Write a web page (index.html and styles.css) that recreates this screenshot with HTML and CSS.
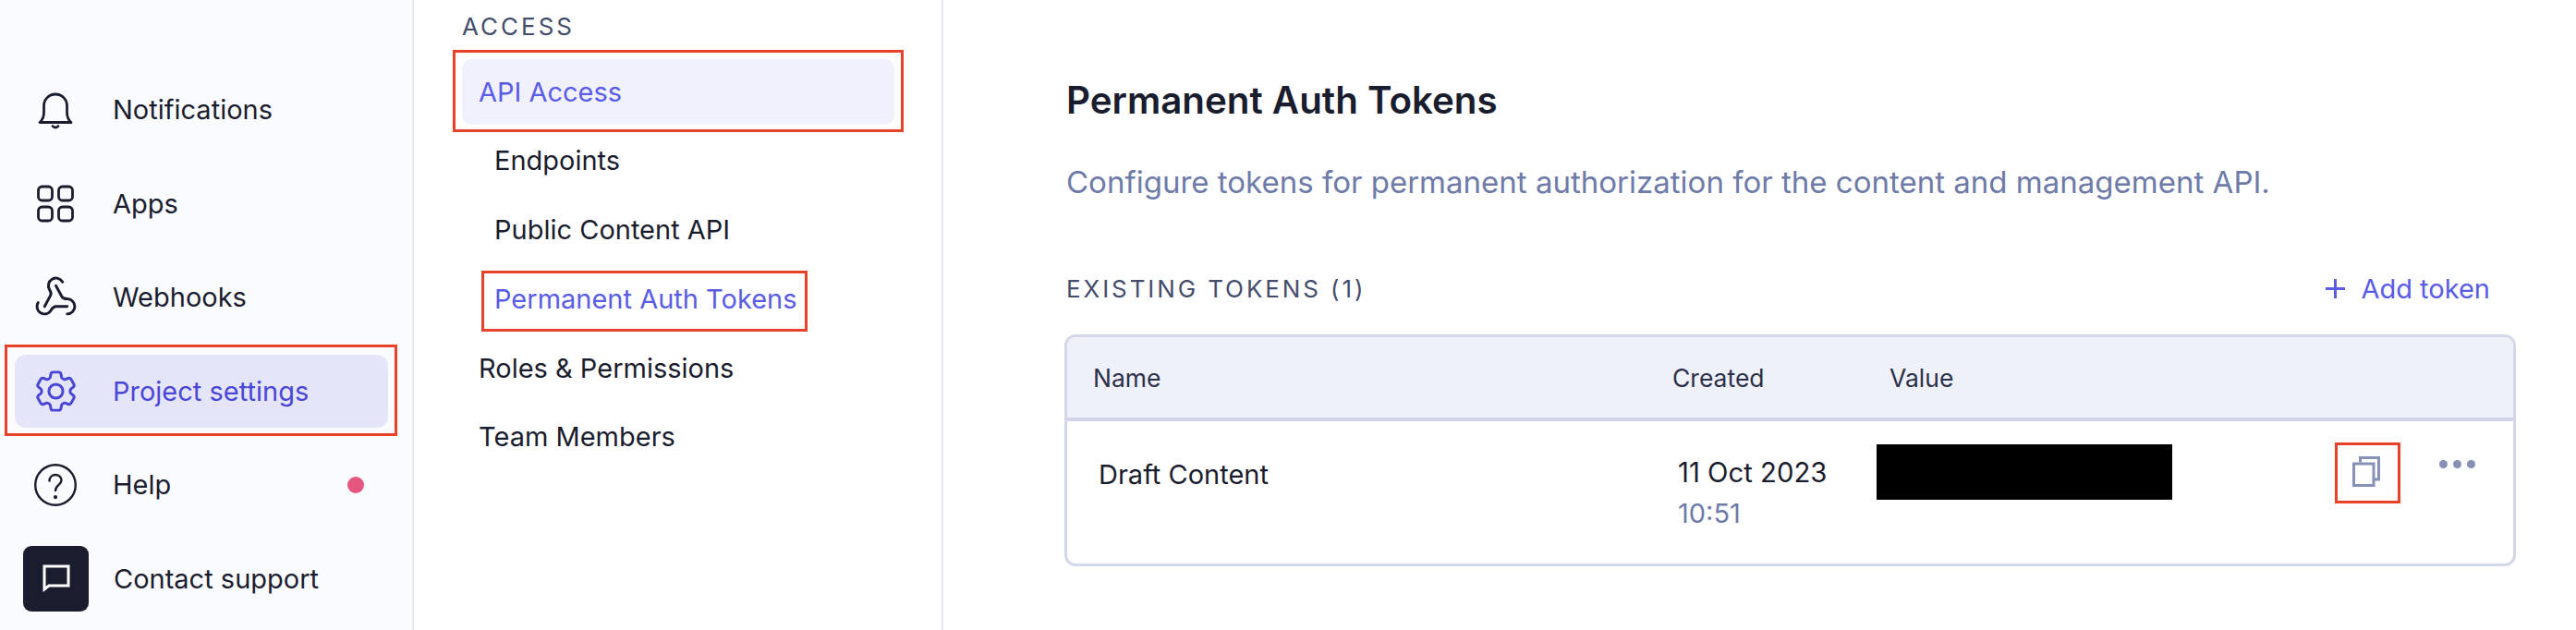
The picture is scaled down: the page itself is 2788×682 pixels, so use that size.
FILE: index.html
```html
<!DOCTYPE html>
<html lang="en">
<head>
<meta charset="utf-8">
<title>Permanent Auth Tokens</title>
<link rel="stylesheet" href="styles.css">
</head>
<body>
<div class="app">
  <aside class="sidebar">
    <a class="nav-item">
      <svg class="nav-icon" viewBox="0 0 44 44"><path d="M5 35.500c3-2.500 4.500-6 4.500-11V17.500C9.500 10.500 15 5 22 5s12.500 5.500 12.500 12.500V24.500c0 5 1.500 8.500 4.500 11zM19 39.500c1.500 2 4.500 2 6 0"/></svg>
      <span>Notifications</span>
    </a>
    <a class="nav-item">
      <svg class="nav-icon" viewBox="0 0 44 44"><rect x="3.500" y="4" width="15" height="15" rx="4"/><rect x="25.500" y="4" width="15" height="15" rx="4"/><rect x="3.500" y="26" width="15" height="15" rx="4"/><rect x="25.500" y="26" width="15" height="15" rx="4"/></svg>
      <span>Apps</span>
    </a>
    <a class="nav-item">
      <svg class="nav-icon webhook" viewBox="0 0 24 24"><path d="M18 16.980h-5.990c-1.100 0-1.950.940-2.480 1.900A4 4 0 0 1 2 17c.010-.700.200-1.400.570-2"/><path d="m6 17 3.130-5.780c.530-.970.100-2.180-.500-3.100a4 4 0 1 1 6.890-4.060"/><path d="m12 6 3.130 5.730C15.660 12.700 16.900 13 18 13a4 4 0 0 1 0 8"/></svg>
      <span>Webhooks</span>
    </a>
    <a class="nav-item active marked">
      <svg class="nav-icon gear" viewBox="0 0 24 24"><path d="M9.594 3.940c.090-.542.560-.940 1.110-.940h2.593c.550 0 1.020.398 1.110.940l.213 1.281c.063.374.313.686.645.870.074.040.147.083.220.127.325.196.720.257 1.075.124l1.217-.456a1.125 1.125 0 0 1 1.370.490l1.296 2.247a1.125 1.125 0 0 1-.260 1.431l-1.003.827c-.293.241-.438.613-.430.992a7.723 7.723 0 0 1 0 .255c-.008.378.137.750.430.991l1.004.827c.424.350.534.955.260 1.430l-1.298 2.247a1.125 1.125 0 0 1-1.369.491l-1.217-.456c-.355-.133-.750-.072-1.076.124a6.470 6.470 0 0 1-.220.128c-.331.183-.581.495-.644.869l-.213 1.281c-.090.543-.560.940-1.110.940h-2.594c-.550 0-1.019-.398-1.110-.940l-.213-1.281c-.062-.374-.312-.686-.644-.870a6.520 6.520 0 0 1-.220-.127c-.325-.196-.720-.257-1.076-.124l-1.217.456a1.125 1.125 0 0 1-1.369-.490l-1.297-2.247a1.125 1.125 0 0 1 .260-1.431l1.004-.827c.292-.240.437-.613.430-.991a6.932 6.932 0 0 1 0-.255c.007-.380-.138-.751-.430-.992l-1.004-.827a1.125 1.125 0 0 1-.260-1.430l1.297-2.247a1.125 1.125 0 0 1 1.370-.491l1.216.456c.356.133.751.072 1.076-.124.072-.044.146-.086.220-.128.332-.183.582-.495.644-.869l.214-1.280Z"/><circle cx="12" cy="12" r="3.300"/></svg>
      <span>Project settings</span>
    </a>
    <a class="nav-item">
      <svg class="nav-icon help" viewBox="0 0 46 46"><circle cx="23" cy="23" r="21.800"/><path d="M16.500 18.500c0-4 3-6.500 6.500-6.500s6.500 2.500 6.500 6c0 4.800-6.500 5.200-6.500 11"/><path class="dot" d="M23 36v.3"/></svg>
      <span>Help</span>
      <i class="badge"></i>
    </a>
    <a class="nav-item">
      <span class="support-box">
        <svg class="support-icon" viewBox="0 0 32 32"><path d="M3 3h26v21H8l-5 4z"/></svg>
      </span>
      <span>Contact support</span>
    </a>
  </aside>

  <nav class="subnav">
    <div class="subnav-title">ACCESS</div>
    <a class="sub-item current marked">API Access</a>
    <a class="sub-item nested">Endpoints</a>
    <a class="sub-item nested">Public Content API</a>
    <a class="sub-item nested selected"><span class="selected-label marked">Permanent Auth Tokens</span></a>
    <a class="sub-item">Roles &amp; Permissions</a>
    <a class="sub-item">Team Members</a>
  </nav>

  <main class="content">
    <h1 class="title">Permanent Auth Tokens</h1>
    <p class="subtitle">Configure tokens for permanent authorization for the content and management API.</p>
    <div class="section-head">
      <h2 class="section-title">EXISTING TOKENS (1)</h2>
      <a class="add-token">
        <svg class="plus" viewBox="0 0 21 21"><path d="M10.500 0v21M0 10.500h21"/></svg>
        Add token
      </a>
    </div>
    <div class="table">
      <div class="row head">
        <div class="cell-name">Name</div>
        <div class="cell-created">Created</div>
        <div class="cell-value">Value</div>
      </div>
      <div class="row body">
        <div class="cell-name draft">Draft Content</div>
        <div class="cell-created">
          <div class="date">11 Oct 2023</div>
          <div class="time">10:51</div>
        </div>
        <div class="redacted"></div>
        <div class="copy-box">
          <svg class="copy" viewBox="0 0 30 33"><path d="M8.500 6.500V1.500h20V25H23"/><rect x="1.500" y="8" width="21.500" height="23.500"/></svg>
        </div>
        <div class="dots"><i></i><i></i><i></i></div>
      </div>
    </div>
  </main>
</div>
</body>
</html>
```

FILE: styles.css
```css
* { box-sizing: border-box; }
html, body { margin: 0; height: 100%; background: #fff; }
body { font-family: Inter, "Noto Sans", sans-serif; color: #1a1d2e; overflow: hidden; }
h1, h2, p { margin: 0; font-weight: normal; }

.app { display: flex; height: 682px; }

.marked { position: relative; }
.marked::after {
  content: "";
  position: absolute;
  inset: -11px -10px -9px -11px;
  border: 3px solid #e8432a;
  pointer-events: none;
}

.sidebar {
  width: 448px;
  flex: none;
  background: #fafbff;
  border-right: 2px solid #e6e8f5;
  padding: 79px 26px 0 16px;
  display: flex;
  flex-direction: column;
  gap: 22.500px;
}
.nav-item {
  height: 79px;
  display: flex;
  align-items: center;
  gap: 17px;
  padding-left: 9px;
  font-size: 29px;
  border-radius: 12px;
}
.nav-icon {
  width: 44px;
  height: 44px;
  margin: 0 23px 0 13px;
  flex: none;
  fill: none;
  stroke: #1a1d2e;
  stroke-width: 2.800;
  stroke-linejoin: round;
  stroke-linecap: round;
}
.nav-icon.webhook { width: 49px; height: 49px; margin: 0 20.500px 0 10.500px; stroke-width: 1.450; }
.nav-icon.gear { width: 55px; height: 55px; margin: 0 17.500px 0 7.500px; stroke-width: 1.300; }
.nav-icon.help { width: 46px; height: 46px; margin: 0 22px 0 12px; stroke-width: 2.400; }
.nav-item.active { background: #e5e5fa; color: #4a46d6; }
.nav-item.active .nav-icon { stroke: #4a46d6; }
.dot { stroke-width: 4; }
.badge {
  margin-left: auto;
  margin-right: 26px;
  width: 18px;
  height: 18px;
  border-radius: 50%;
  background: #e5577f;
}
.support-box {
  width: 71px;
  height: 71px;
  flex: none;
  border-radius: 9px;
  background: #1a1d2e;
  display: flex;
  align-items: center;
  justify-content: center;
  margin-right: 10px;
}
.support-icon { width: 32px; height: 32px; fill: none; stroke: #fff; stroke-width: 3; }

.subnav {
  width: 573px;
  flex: none;
  border-right: 2px solid #e6e8f5;
  padding: 0 51px 0 52px;
  background: #fff;
}
.subnav-title {
  font-size: 26px;
  letter-spacing: 3px;
  color: #454d6d;
  line-height: 30px;
  padding-top: 14px;
  height: 63.500px;
}
.sub-item {
  display: flex;
  align-items: center;
  height: 71px;
  margin-bottom: 3.800px;
  padding-left: 18px;
  font-size: 29px;
  border-radius: 10px;
}
.sub-item.nested { padding-left: 35px; }
.sub-item.current { background: #f1f1fd; color: #5a5ce6; }
.sub-item.current::after { inset: -10px -10px -8px -10px; }
.sub-item.selected { color: #5a5ce6; }
.selected-label::after { inset: -13px -11px -18px -14px; }

.content { flex: 1; padding: 85px 65px 0 133px; }
.title { font-size: 40.300px; font-weight: 600; line-height: 48px; color: #1a1d2e; }
.subtitle { font-size: 33.030px; line-height: 40px; margin-top: 44px; color: #6e7aa8; }
.section-head {
  display: flex;
  align-items: center;
  justify-content: space-between;
  margin-top: 75px;
  height: 40px;
  padding-right: 28px;
}
.section-title { font-size: 26px; letter-spacing: 2.900px; color: #454d6d; }
.add-token { display: flex; align-items: center; gap: 17px; font-size: 29px; color: #5a5ce6; }
.plus { width: 21px; height: 21px; fill: none; stroke: #5a5ce6; stroke-width: 3; }

.table {
  margin: 30px 0 0 -2px;
  height: 251px;
  border: 3px solid #d3d7e8;
  border-radius: 12px;
  overflow: hidden;
}
.row { display: flex; position: relative; }
.head {
  height: 91px;
  align-items: center;
  background: #eef1fa;
  border-bottom: 4px solid #d1d4e6;
  font-size: 26.500px;
  color: #2c3049;
}
.head .cell-name { width: 655px; padding-left: 28px; }
.head .cell-created { width: 235px; }
.body { height: 155px; padding-top: 24px; }
.body .cell-name { width: 661px; padding-left: 34px; }
.draft { font-size: 29px; line-height: 68px; height: 68px; }
.body .cell-created { width: 215px; padding-top: 14px; }
.date { font-size: 29.300px; line-height: 36px; }
.time { font-size: 29px; line-height: 36px; margin-top: 8px; color: #6e7aa8; }
.redacted { width: 320px; height: 60px; margin-top: 1px; background: #000; margin-right: 176px; flex: none; }
.copy-box {
  width: 71px;
  height: 66px;
  margin-top: -1px;
  border: 3px solid #e8432a;
  display: flex;
  align-items: center;
  justify-content: center;
  flex: none;
  margin-right: 42px;
}
.copy { width: 30px; height: 33px; margin: -4px 0 0 -3px; fill: none; stroke: #8790b5; stroke-width: 3; }
.dots { display: flex; gap: 6px; margin-top: 18px; height: 9px; }
.dots i { width: 9px; height: 9px; border-radius: 50%; background: #8790b5; }
```
